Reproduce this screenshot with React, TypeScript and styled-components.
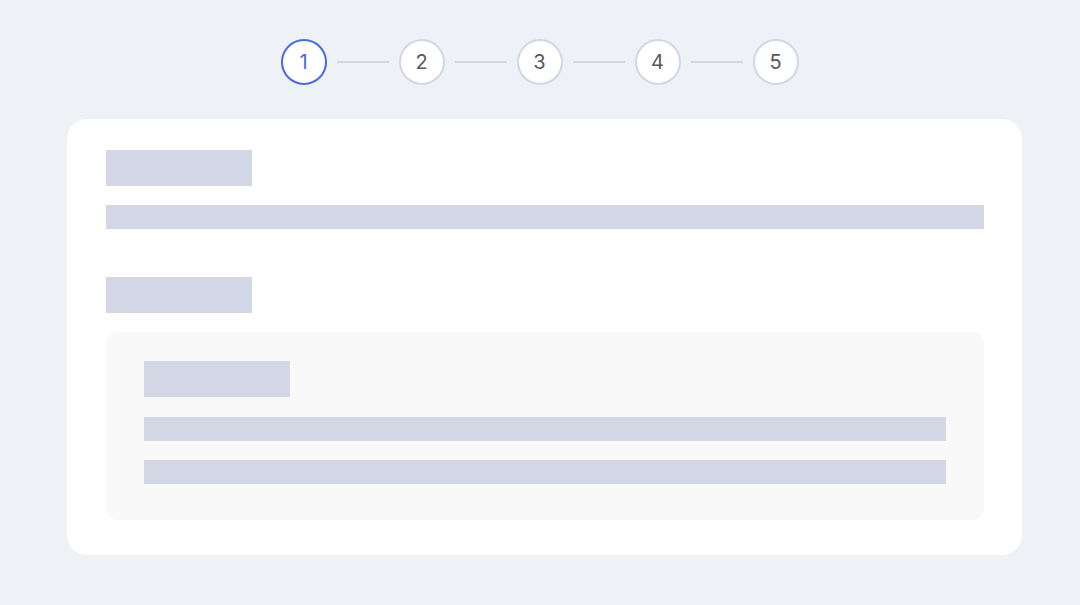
import styled, { createGlobalStyle } from "styled-components";

const GlobalStyle = createGlobalStyle`
  html, body {
    margin: 0;
    padding: 0;
    background: #eef1f5;
    font-family: Inter, "Noto Sans", sans-serif;
  }
`;

const steps = [1, 2, 3, 4, 5];

const App = () => {
  return (
    <Page>
      <GlobalStyle />
      <Stepper>
        {steps.map((n, i) => (
          <StepGroup key={n}>
            {i > 0 ? <Connector /> : null}
            <StepCircle active={n === 1}>{n}</StepCircle>
          </StepGroup>
        ))}
      </Stepper>
      <Card>
        <Label />
        <Bar />
        <Label spaced />
        <Panel>
          <Label />
          <Bar />
          <Bar />
        </Panel>
      </Card>
    </Page>
  );
};

export default App;

const Page = styled.div`
  width: 1080px;
  height: 605px;
  box-sizing: border-box;
  padding-top: 39px;
  display: flex;
  flex-direction: column;
  align-items: center;
`;

const Stepper = styled.div`
  display: flex;
  align-items: center;
  margin-left: -1px;
`;

const StepGroup = styled.div`
  display: flex;
  align-items: center;
`;

const Connector = styled.div`
  width: 52px;
  height: 2px;
  margin: 0 10px;
  background: #d3d6e5;
`;

const StepCircle = styled.div<{ active?: boolean }>`
  width: 46px;
  height: 46px;
  box-sizing: border-box;
  border-radius: 50%;
  background: #ffffff;
  border: 2px solid ${(p) => (p.active ? "#4a6be0" : "#d3d6e5")};
  color: ${(p) => (p.active ? "#4a6be0" : "#55585f")};
  display: flex;
  align-items: center;
  justify-content: center;
  font-size: 20px;
  font-weight: 400;
`;

const Card = styled.div`
  margin-top: 34px;
  margin-left: 8px;
  width: 955px;
  box-sizing: border-box;
  padding: 31px 38px 35px 39px;
  background: #ffffff;
  border-radius: 20px;
  display: flex;
  flex-direction: column;
  gap: 19px;
`;

const Label = styled.div<{ spaced?: boolean }>`
  width: 146px;
  height: 36px;
  background: #d3d6e5;
  margin-top: ${(p) => (p.spaced ? "29px" : "0")};
`;

const Bar = styled.div`
  width: 100%;
  height: 24px;
  background: #d3d6e5;
`;

const Panel = styled.div`
  background: #f9f9f9;
  border-radius: 12px;
  padding: 29px 38px 36px 38px;
  display: flex;
  flex-direction: column;
  gap: 19.5px;
`;
